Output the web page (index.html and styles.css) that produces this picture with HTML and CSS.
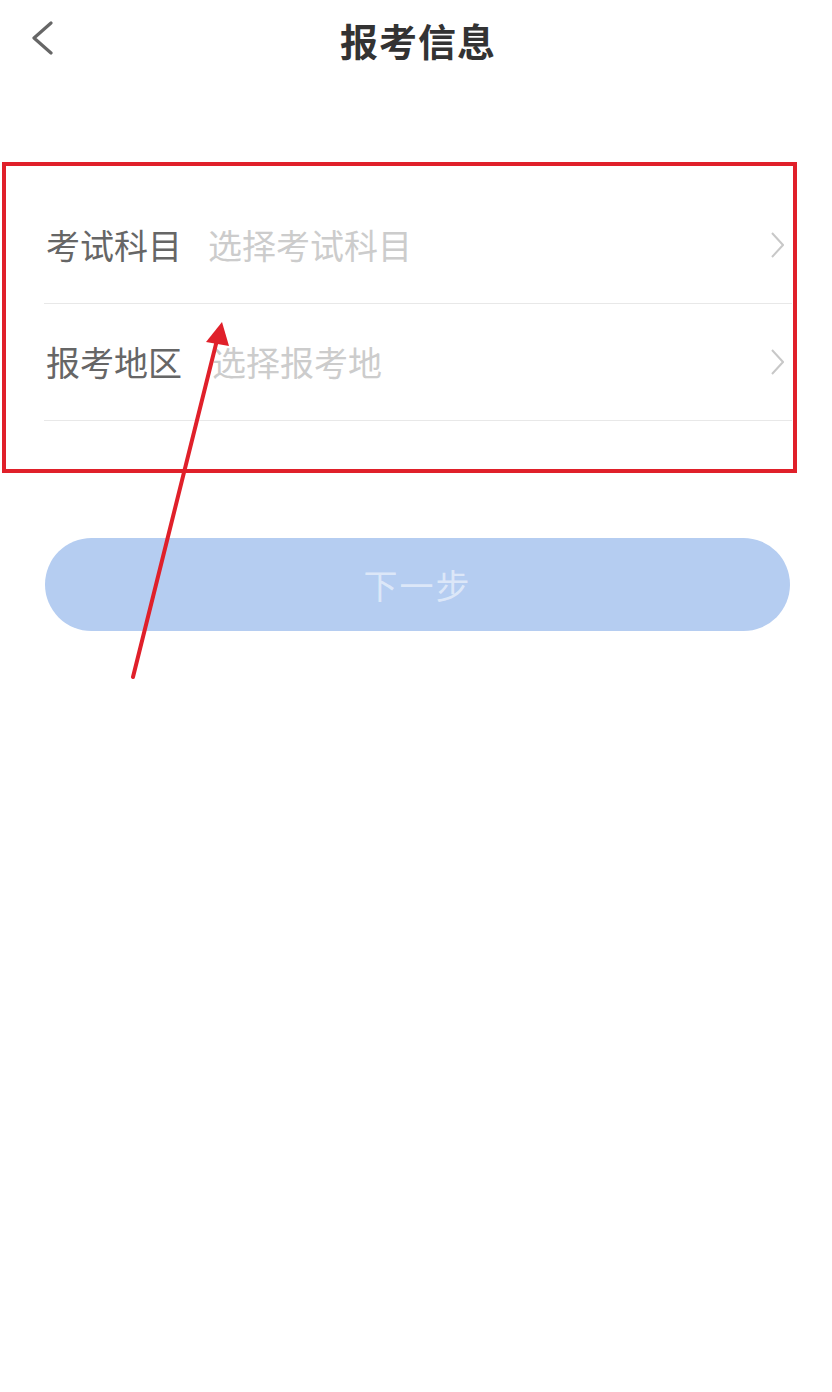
FILE: index.html
```html
<!DOCTYPE html>
<html lang="zh-CN">
<head>
<meta charset="utf-8">
<title>报考信息</title>
<link rel="stylesheet" href="styles.css">
</head>
<body>
<div class="page">
  <header class="header">
    <svg class="back" width="24" height="36" viewBox="0 0 24 36">
      <polyline points="20,2 3,17 20,32" fill="none" stroke="#666" stroke-width="3.2" stroke-linecap="round" stroke-linejoin="round"/>
    </svg>
    <h1 class="title">报考信息</h1>
  </header>

  <div class="list">
    <div class="row">
      <span class="label">考试科目</span>
      <span class="placeholder">选择考试科目</span>
      <svg class="chev" width="14" height="28" viewBox="0 0 14 28">
        <polyline points="2,2 13,14 2,26" fill="none" stroke="#c8c8c8" stroke-width="2"/>
      </svg>
    </div>
    <div class="row">
      <span class="label">报考地区</span>
      <span class="placeholder second">选择报考地</span>
      <svg class="chev" width="14" height="28" viewBox="0 0 14 28">
        <polyline points="2,2 13,14 2,26" fill="none" stroke="#c8c8c8" stroke-width="2"/>
      </svg>
    </div>
  </div>

  <div class="actions">
    <button class="next" type="button">下一步</button>
  </div>

  <div class="annot-box"></div>
  <svg class="annot-arrow" width="832" height="1392" viewBox="0 0 832 1392">
    <line x1="133" y1="677" x2="217" y2="340" stroke="#e0202a" stroke-width="4" stroke-linecap="round"/>
    <polygon points="222,322 206,342 229,346" fill="#e0202a"/>
  </svg>
</div>
</body>
</html>
```

FILE: styles.css
```css
* { box-sizing: border-box; }
html, body {
  margin: 0;
  padding: 0;
  background: #ffffff;
}
body {
  font-family: "Noto Sans CJK SC", "Noto Sans", sans-serif;
  width: 832px;
  height: 1392px;
  overflow: hidden;
}
.page {
  position: relative;
  width: 832px;
  height: 1392px;
}
.header {
  height: 80px;
  display: flex;
  align-items: center;
  justify-content: center;
  position: relative;
}
.back {
  position: absolute;
  left: 31px;
  top: 21px;
}
.title {
  margin: 0;
  font-size: 38px;
  font-weight: 700;
  color: #333333;
  line-height: 80px;
  letter-spacing: 1px;
  padding-left: 4px;
}
.list {
  margin: 107px 40px 0 44px;
}
.row {
  height: 117px;
  display: flex;
  align-items: center;
  border-bottom: 1px solid #e8e8e8;
}
.label {
  font-size: 34px;
  color: #666666;
  line-height: 1;
  padding-left: 2px;
}
.placeholder {
  font-size: 34px;
  color: #cccccc;
  line-height: 1;
  margin-left: 26px;
}
.placeholder.second {
  margin-left: 30px;
}
.chev {
  margin-left: auto;
  margin-right: 8px;
}
.actions {
  margin: 117px 42px 0 45px;
}
.next {
  display: block;
  width: 100%;
  height: 93px;
  border: none;
  border-radius: 47px;
  background: #b5cdf1;
  color: rgba(255, 255, 255, 0.55);
  font-family: "Noto Sans CJK SC", "Noto Sans", sans-serif;
  font-size: 34px;
  letter-spacing: 2px;
  padding: 0;
}
.annot-box {
  position: absolute;
  left: 2px;
  top: 162px;
  width: 795px;
  height: 311px;
  border: 4px solid #e0202a;
}
.annot-arrow {
  position: absolute;
  left: 0;
  top: 0;
  pointer-events: none;
}
```
